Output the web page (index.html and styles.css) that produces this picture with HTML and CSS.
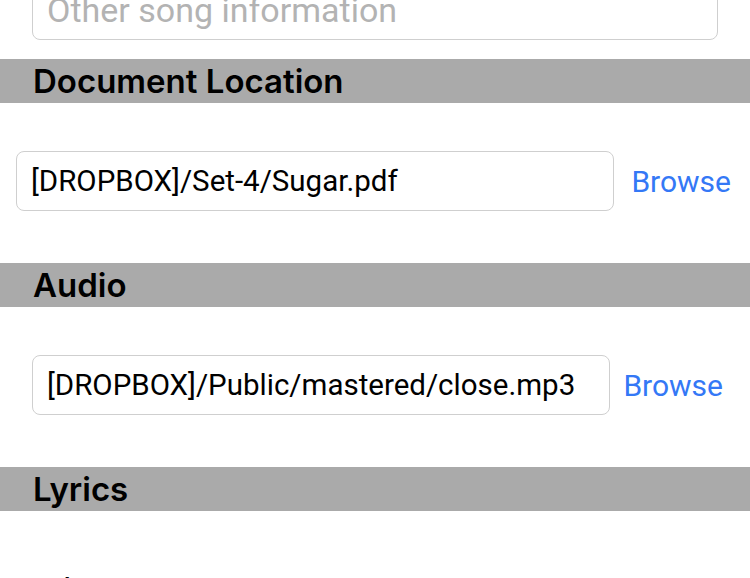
FILE: index.html
```html
<!DOCTYPE html>
<html>
<head>
<meta charset="utf-8">
<link rel="stylesheet" href="styles.css">
</head>
<body>
<div class="page">
  <div class="section-body first">
    <div class="field wide"><span class="placeholder">Other song information</span></div>
  </div>
  <div class="header">Document Location</div>
  <div class="section-body">
    <div class="row doc">
      <div class="field"><span class="value">[DROPBOX]/Set-4/Sugar.pdf</span></div>
      <span class="browse">Browse</span>
    </div>
  </div>
  <div class="header">Audio</div>
  <div class="section-body">
    <div class="row audio">
      <div class="field"><span class="value">[DROPBOX]/Public/mastered/close.mp3</span></div>
      <span class="browse">Browse</span>
    </div>
  </div>
  <div class="header">Lyrics</div>
  <div class="section-body lyrics">
    <div class="nav-row">
      <span class="nav-label">Edit Lyrics</span>
      <svg class="chevron" width="16" height="26" viewBox="0 0 16 26"><path d="M2.5 2.5 L13 13 L2.5 23.5" fill="none" stroke="#c7c7cc" stroke-width="3" stroke-linecap="round" stroke-linejoin="round"/></svg>
    </div>
  </div>
</div>
</body>
</html>
```
FILE: styles.css
```css
html, body {
  margin: 0;
  padding: 0;
  background: #fff;
  overflow: hidden;
  height: 578px;
}
.page {
  font-family: "Roboto", "Liberation Sans", sans-serif;
  margin-top: -20px;
}
.section-body {
  padding: 48px 0 52px;
}
.section-body.first {
  padding: 0 32px 19px;
}
.field {
  height: 58px;
  border: 1px solid #cfcfcf;
  border-radius: 8px;
  display: flex;
  align-items: center;
  padding: 0 14px;
  flex: 1;
  background: #fff;
}
.placeholder {
  color: #b3b3b3;
  font-size: 34px;
}
.value {
  color: #000;
  font-size: 29.5px;
}
.header {
  height: 44px;
  background: #aaaaaa;
  display: flex;
  align-items: center;
  padding-left: 33px;
  font-family: "Inter", "Roboto", sans-serif;
  font-size: 33px;
  font-weight: 600;
  color: #000;
}
.row {
  display: flex;
  align-items: center;
}
.row.doc {
  padding: 0 19px 0 16px;
}
.row.doc .browse {
  margin-left: 17px;
}
.row.audio {
  padding: 0 27px 0 32px;
}
.row.audio .browse {
  margin-left: 13px;
}
.browse {
  color: #3478f6;
  font-size: 30px;
}
.section-body.lyrics {
  padding: 49px 0 0;
}
.nav-row {
  height: 60px;
  display: flex;
  align-items: center;
  justify-content: space-between;
  padding: 0 30px 0 33px;
}
.nav-label {
  font-size: 34px;
  color: #000;
}
```
